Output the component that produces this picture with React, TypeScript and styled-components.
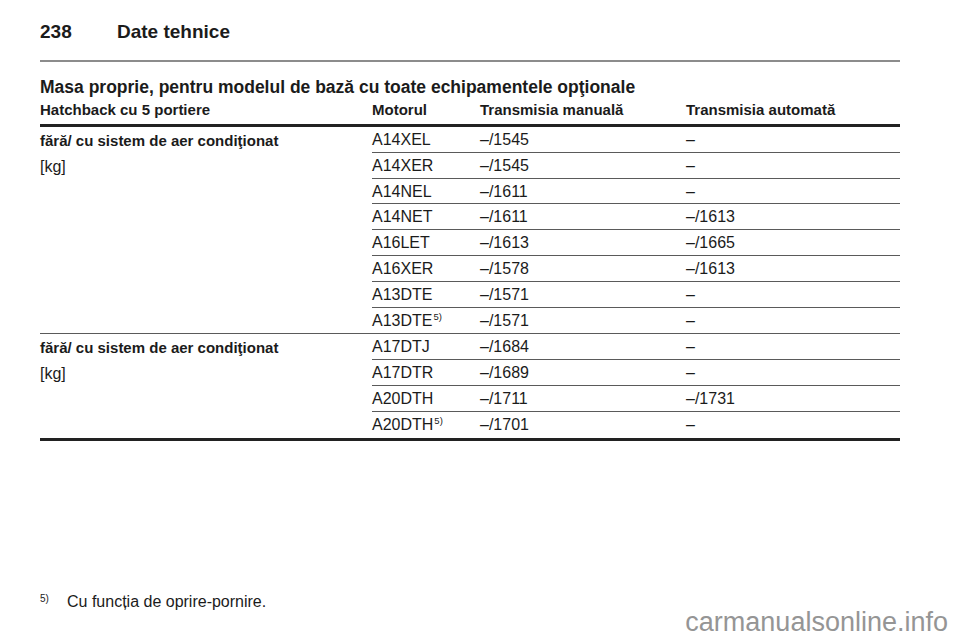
import React from 'react';
import styled, { createGlobalStyle } from 'styled-components';

const GlobalStyle = createGlobalStyle`
  html, body {
    margin: 0;
    padding: 0;
    background: #fff;
  }
  body {
    font-family: "Liberation Sans", Arial, Helvetica, sans-serif;
    color: #1b1b1b;
  }
`;

const Page = styled.div`
  position: relative;
  width: 960px;
  height: 642px;
  box-sizing: border-box;
  padding: 0 60px 0 40px;
  overflow: hidden;
`;

const PageHeader = styled.header`
  display: flex;
  align-items: flex-end;
  height: 62px;
  box-sizing: border-box;
  padding-bottom: 16px;
  border-bottom: 2px solid #8c8c8c;
  font-size: 19px;
  line-height: 24px;
  font-weight: bold;
`;

const PageNumber = styled.span`
  width: 77px;
`;

const Title = styled.h2`
  margin: 14px 0 0;
  font-size: 17.5px;
  line-height: 22px;
  font-weight: bold;
`;

const Table = styled.div`
  margin-top: 3px;
`;

const HeadRow = styled.div`
  display: grid;
  grid-template-columns: 332px 108px 206px 1fr;
  padding-bottom: 5px;
  border-bottom: 3px solid #222;
  font-size: 15px;
  line-height: 18px;
  font-weight: bold;
`;

const Group = styled.div<{ $last?: boolean }>`
  display: grid;
  grid-template-columns: 332px 1fr;
  border-bottom: ${p => (p.$last ? '3px solid #222' : '1.5px solid #5a5a5a')};
`;

const Label = styled.div`
  padding-top: 1px;
  font-size: 16px;
  line-height: 26px;
`;

const LabelStrong = styled.div`
  font-weight: bold;
  font-size: 15px;
`;

const Rows = styled.div`
  display: flex;
  flex-direction: column;
`;

const Row = styled.div`
  display: grid;
  grid-template-columns: 108px 206px 1fr;
  height: 25.8px;
  box-sizing: border-box;
  padding-top: 3px;
  font-size: 16px;
  line-height: 20px;

  &:not(:last-child) {
    border-bottom: 1.5px solid #5a5a5a;
  }
`;

const Sup = styled.sup`
  font-size: 9.5px;
  line-height: 0;
  vertical-align: 6px;
  margin-left: 1px;
`;

const Footnote = styled.div`
  display: flex;
  margin-top: 151px;
  font-size: 16px;
  line-height: 20px;
`;

const FootMark = styled.span`
  width: 27px;
  font-size: 10px;
  line-height: 14px;
`;

const Watermark = styled.div`
  position: absolute;
  right: 12px;
  bottom: 4px;
  font-size: 27px;
  color: #959595;
`;

type Engine = { code: string; sup?: boolean; manual: string; auto: string };

const groups: Engine[][] = [
  [
    { code: 'A14XEL', manual: '–/1545', auto: '–' },
    { code: 'A14XER', manual: '–/1545', auto: '–' },
    { code: 'A14NEL', manual: '–/1611', auto: '–' },
    { code: 'A14NET', manual: '–/1611', auto: '–/1613' },
    { code: 'A16LET', manual: '–/1613', auto: '–/1665' },
    { code: 'A16XER', manual: '–/1578', auto: '–/1613' },
    { code: 'A13DTE', manual: '–/1571', auto: '–' },
    { code: 'A13DTE', sup: true, manual: '–/1571', auto: '–' }
  ],
  [
    { code: 'A17DTJ', manual: '–/1684', auto: '–' },
    { code: 'A17DTR', manual: '–/1689', auto: '–' },
    { code: 'A20DTH', manual: '–/1711', auto: '–/1731' },
    { code: 'A20DTH', sup: true, manual: '–/1701', auto: '–' }
  ]
];

export default function App() {
  return (
    <Page>
      <GlobalStyle />
      <PageHeader>
        <PageNumber>238</PageNumber>
        <span>Date tehnice</span>
      </PageHeader>
      <Title>Masa proprie, pentru modelul de bază cu toate echipamentele opţionale</Title>
      <Table>
        <HeadRow>
          <span>Hatchback cu 5 portiere</span>
          <span>Motorul</span>
          <span>Transmisia manuală</span>
          <span>Transmisia automată</span>
        </HeadRow>
        {groups.map((rows, gi) => (
          <Group key={gi} $last={gi === groups.length - 1}>
            <Label>
              <LabelStrong>fără/ cu sistem de aer condiţionat</LabelStrong>
              <div>[kg]</div>
            </Label>
            <Rows>
              {rows.map((r, i) => (
                <Row key={i}>
                  <span>
                    {r.code}
                    {r.sup && <Sup>5)</Sup>}
                  </span>
                  <span>{r.manual}</span>
                  <span>{r.auto}</span>
                </Row>
              ))}
            </Rows>
          </Group>
        ))}
      </Table>
      <Footnote>
        <FootMark>5)</FootMark>
        <span>Cu funcția de oprire-pornire.</span>
      </Footnote>
      <Watermark>carmanualsonline.info</Watermark>
    </Page>
  );
}
